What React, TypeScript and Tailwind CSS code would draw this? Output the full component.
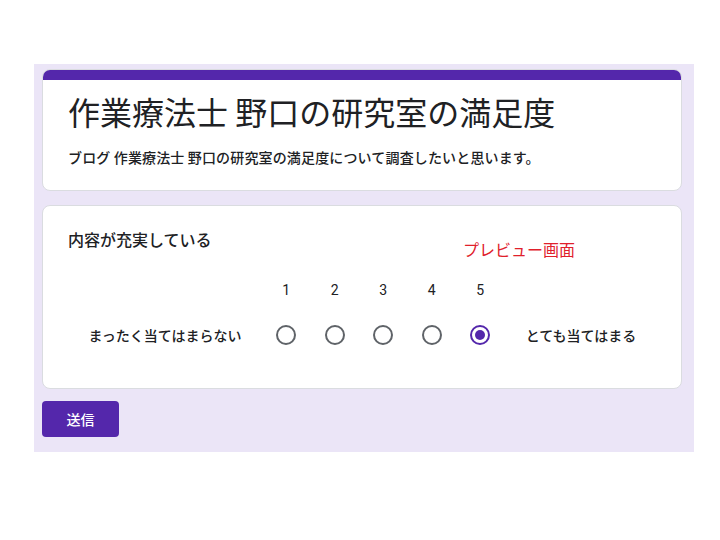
import React from "react";

const font = { fontFamily: '"Noto Sans CJK JP", "Noto Sans", sans-serif' };

function Radio({ checked }: { checked?: boolean }) {
  return (
    <div className="flex w-[48.5px] justify-center">
      <div
        className={
          "flex h-[20px] w-[20px] items-center justify-center rounded-full border-2 " +
          (checked ? "border-[#5427ab]" : "border-[#5f6368]")
        }
      >
        {checked && <div className="h-[10px] w-[10px] rounded-full bg-[#5427ab]" />}
      </div>
    </div>
  );
}

export default function App() {
  return (
    <div className="min-h-[540px] w-[720px] bg-white" style={font}>
      <div className="pl-[34px] pt-[64px]">
        <div className="w-[660px] bg-[#ebe5f7] pb-[15px] pl-[8px] pr-[12px] pt-[5px]">
          {/* Header card */}
          <div className="h-[122px] w-[640px] overflow-hidden rounded-[8px] border border-[#dadce0] bg-white">
            <div className="h-[10px] bg-[#5427ab]" />
            <div className="pl-[25px] pt-[9px]">
              <div className="text-[32px] leading-[44px] text-[#202124]">作業療法士 野口の研究室の満足度</div>
              <div className="mt-[14px] text-[14px] font-medium leading-[20px] tracking-[0.15px] text-[#202124]">
                ブログ 作業療法士 野口の研究室の満足度について調査したいと思います。
              </div>
            </div>
          </div>

          {/* Question card */}
          <div className="relative mt-[14px] h-[184px] w-[640px] rounded-[8px] border border-[#dadce0] bg-white pl-[25px] pt-[22px]">
            <div className="text-[16px] font-medium leading-[22px] text-[#202124]">内容が充実している</div>
            <div className="absolute left-[420px] top-[32px] text-[16px] leading-[22px] text-[#e0202b]">
              プレビュー画面
            </div>
            <div className="mt-[30px] flex items-center text-[14px] leading-[20px] text-[#202124]">
              <div className="w-[194px]" />
              {[1, 2, 3, 4, 5].map((n) => (
                <div key={n} className="w-[48.5px] text-center" style={{ fontFamily: "Roboto, sans-serif" }}>
                  {n}
                </div>
              ))}
            </div>
            <div className="mt-[25px] flex items-center text-[14px] font-medium leading-[20px] text-[#202124]">
              <div className="w-[194px] text-center">まったく当てはまらない</div>
              <Radio />
              <Radio />
              <Radio />
              <Radio />
              <Radio checked />
              <div className="w-[153px] text-center">とても当てはまる</div>
            </div>
          </div>

          {/* Submit */}
          <div className="mt-[12px] flex h-[36px] w-[77px] items-center justify-center rounded-[4px] bg-[#5427ab] text-[14px] font-medium text-white">
            送信
          </div>
        </div>
      </div>
    </div>
  );
}
